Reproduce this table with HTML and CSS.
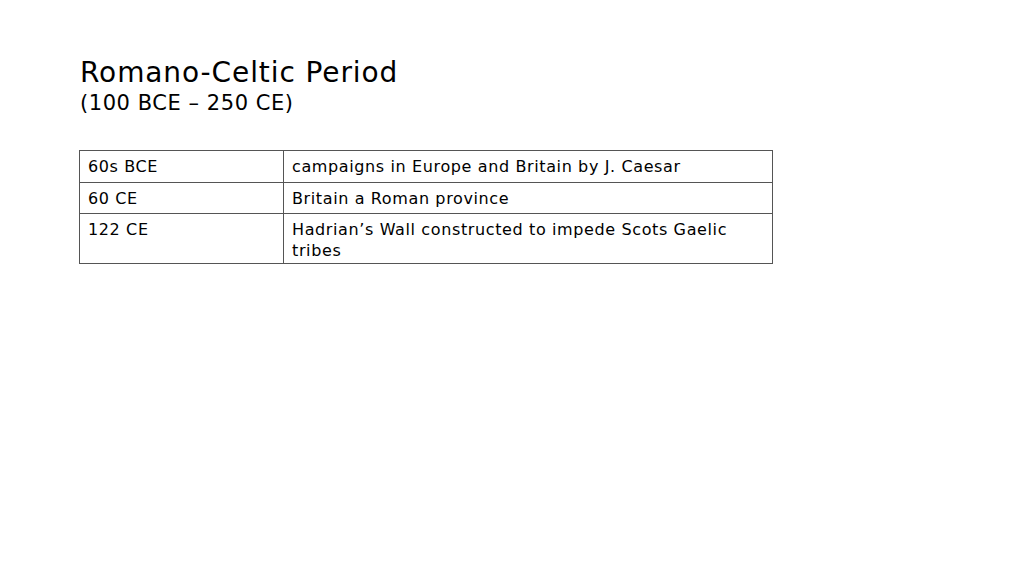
FILE: index.html
```html
<!DOCTYPE html>
<html>
<head>
<meta charset="utf-8">
<link rel="stylesheet" href="styles.css">
</head>
<body>
<div class="slide">
  <h1 class="title">Romano-Celtic Period</h1>
  <div class="subtitle">(100 BCE – 250 CE)</div>
  <table class="timeline">
    <tr><td class="date">60s BCE</td><td>campaigns in Europe and Britain by J. Caesar</td></tr>
    <tr><td class="date">60 CE</td><td>Britain a Roman province</td></tr>
    <tr class="multi"><td class="date">122 CE</td><td>Hadrian’s Wall constructed to impede Scots Gaelic tribes</td></tr>
  </table>
</div>
</body>
</html>
```
FILE: styles.css
```css
html, body {
  margin: 0;
  padding: 0;
  background: #fff;
}
.slide {
  width: 1024px;
  height: 576px;
  padding: 55px 0 0 79px;
  box-sizing: border-box;
  font-family: "DejaVu Sans", Verdana, sans-serif;
  color: #000;
}
.title {
  margin: 0 0 0 1px;
  font-weight: normal;
  font-size: 28px;
  line-height: 36px;
  letter-spacing: 0.9px;
}
.subtitle {
  margin-left: 1px;
  font-size: 21px;
  line-height: 24px;
  letter-spacing: 0.55px;
}
.timeline {
  margin-top: 35px;
  width: 694px;
  border-collapse: collapse;
  font-size: 16px;
  line-height: 21px;
  letter-spacing: 0.62px;
}
.timeline td {
  border: 1px solid #555;
  padding: 5px 8px 4.5px 8px;
  vertical-align: top;
}
.timeline .multi td {
  padding-bottom: 1.5px;
}
.timeline td.date {
  width: 187px;
}
```
